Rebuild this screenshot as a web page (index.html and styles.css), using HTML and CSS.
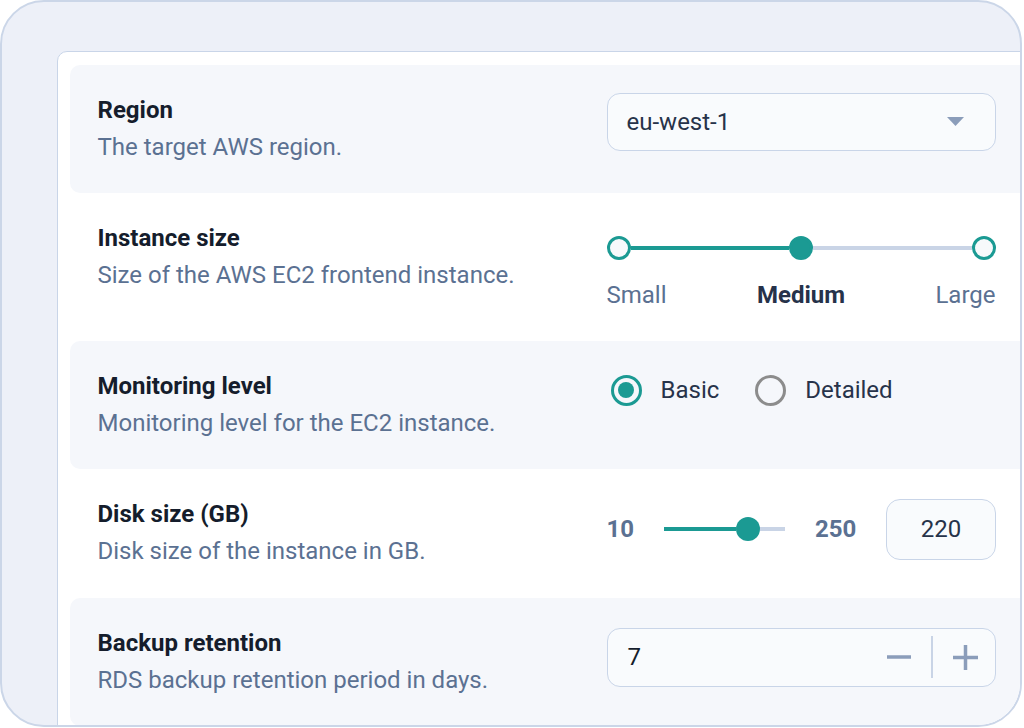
FILE: index.html
```html
<!DOCTYPE html>
<html lang="en">
<head>
  <meta charset="UTF-8" />
  <title>Instance settings</title>
  <link rel="stylesheet" href="styles.css">
</head>
<body>
  <div class="frame">
    <div class="panel">

      <div class="row shaded">
        <div class="info">
          <div class="title">Region</div>
          <div class="desc">The target AWS region.</div>
        </div>
        <div class="control">
          <div class="select">
            <span>eu-west-1</span>
            <svg class="caret" width="17" height="9" viewBox="0 0 17 9"><path d="M0 0h17L8.5 9z" fill="#8b9dba"/></svg>
          </div>
        </div>
      </div>

      <div class="row tall">
        <div class="info">
          <div class="title">Instance size</div>
          <div class="desc">Size of the AWS EC2 frontend instance.</div>
        </div>
        <div class="control">
          <div class="steps">
            <span class="dot"></span>
            <span class="line on"></span>
            <span class="dot on"></span>
            <span class="line"></span>
            <span class="dot"></span>
          </div>
          <div class="step-labels">
            <span>Small</span>
            <span class="current">Medium</span>
            <span>Large</span>
          </div>
        </div>
      </div>

      <div class="row shaded">
        <div class="info">
          <div class="title">Monitoring level</div>
          <div class="desc">Monitoring level for the EC2 instance.</div>
        </div>
        <div class="control">
          <div class="radios">
            <label class="radio checked"><span class="ring"></span>Basic</label>
            <label class="radio"><span class="ring"></span>Detailed</label>
          </div>
        </div>
      </div>

      <div class="row">
        <div class="info">
          <div class="title">Disk size (GB)</div>
          <div class="desc">Disk size of the instance in GB.</div>
        </div>
        <div class="control">
          <div class="range">
            <span class="bound">10</span>
            <div class="track">
              <span class="fill"></span>
              <span class="thumb"></span>
              <span class="rest"></span>
            </div>
            <span class="bound">250</span>
            <div class="num-box">220</div>
          </div>
        </div>
      </div>

      <div class="row shaded">
        <div class="info">
          <div class="title">Backup retention</div>
          <div class="desc">RDS backup retention period in days.</div>
        </div>
        <div class="control">
          <div class="stepper">
            <span class="value">7</span>
            <svg width="24" height="24" viewBox="0 0 24 24"><path d="M0 12h24" stroke="#8b9dba" stroke-width="3.5"/></svg>
            <span class="divider"></span>
            <svg width="25" height="25" viewBox="0 0 25 25"><path d="M0 12.5h25M12.5 0v25" stroke="#8b9dba" stroke-width="3.5"/></svg>
          </div>
        </div>
      </div>

    </div>
  </div>
</body>
</html>
```

FILE: styles.css
```css
* {
  box-sizing: border-box;
}

html, body {
  margin: 0;
  padding: 0;
  width: 1024px;
  height: 728px;
  background: #fff;
  font-family: Roboto, 'Liberation Sans', sans-serif;
  overflow: hidden;
}

.frame {
  width: 1022px;
  height: 727px;
  border: 2px solid #cbd6e8;
  border-radius: 44px;
  background: #edf0f8;
  padding: 49px 0 0 55px;
  overflow: hidden;
}

.panel {
  width: 1000px;
  height: 720px;
  background: #fff;
  border: 1.5px solid #c9d5e8;
  border-radius: 10px 0 0 0;
  padding: 12.5px 0 0 11.5px;
}

.row {
  display: grid;
  grid-template-columns: 509px 389px;
  height: 128px;
  padding: 29px 0 0 28px;
  border-radius: 10px;
}

.row.tall {
  height: 148px;
}

.row:nth-child(4) {
  height: 129px;
}

.shaded {
  background: #f5f7fb;
}

.title {
  font-size: 24px;
  font-weight: 700;
  line-height: 32px;
  color: #151d2c;
  margin-bottom: 5px;
}

.desc {
  font-size: 24px;
  line-height: 32px;
  color: #5b7192;
}

/* select */
.select {
  display: flex;
  align-items: center;
  justify-content: space-between;
  height: 58px;
  margin-top: -1px;
  padding: 0 31px 0 19px;
  border: 1.5px solid #c9d5e8;
  border-radius: 13px;
  background: #f9fbfd;
  font-size: 24px;
  color: #27334a;
}

/* step slider */
.steps {
  display: flex;
  align-items: center;
  margin-top: 14px;
}

.dot {
  width: 24px;
  height: 24px;
  border-radius: 50%;
  border: 3.5px solid #1b9a93;
  background: #f7f9fb;
  flex: none;
}

.dot.on {
  background: #1b9a93;
}

.line {
  flex: 1;
  height: 4px;
  background: #c9d4e6;
}

.line.on {
  background: #1b9a93;
}

.step-labels {
  display: grid;
  grid-template-columns: 1fr auto 1fr;
  margin-top: 20px;
  font-size: 24px;
  line-height: 30px;
  color: #5b7192;
}

.step-labels span:last-child {
  justify-self: end;
}

.step-labels .current {
  font-weight: 700;
  color: #26324a;
}

/* radios */
.radios {
  display: flex;
  gap: 36px;
  margin-top: 5px;
  padding-left: 4px;
}

.radio {
  display: flex;
  align-items: center;
  gap: 19px;
  font-size: 24px;
  line-height: 31px;
  color: #27334a;
}

.ring {
  width: 31px;
  height: 31px;
  border-radius: 50%;
  border: 3px solid #8c8c8c;
  display: flex;
  align-items: center;
  justify-content: center;
}

.radio.checked .ring {
  border: 3.5px solid #1b9a93;
}

.radio.checked .ring::after {
  content: '';
  width: 16px;
  height: 16px;
  border-radius: 50%;
  background: #1b9a93;
}

/* range */
.range {
  display: flex;
  align-items: center;
  gap: 30px;
  margin-top: 1px;
}

.bound {
  font-size: 24px;
  font-weight: 700;
  color: #5b7192;
}

.track {
  display: flex;
  align-items: center;
  width: 122px;
}

.track .fill {
  width: 72px;
  height: 4px;
  background: #1b9a93;
}

.track .thumb {
  width: 24px;
  height: 24px;
  border-radius: 50%;
  background: #1b9a93;
}

.track .rest {
  flex: 1;
  height: 4px;
  background: #c9d4e6;
}

.num-box {
  width: 110px;
  height: 61px;
  display: flex;
  align-items: center;
  justify-content: center;
  border: 1.5px solid #c9d5e8;
  border-radius: 14px;
  background: #f9fbfd;
  font-size: 24px;
  color: #27334a;
}

/* stepper */
.stepper {
  display: flex;
  align-items: center;
  gap: 20px;
  height: 59px;
  margin-top: 1px;
  padding: 0 17px 0 20px;
  border: 1.5px solid #c9d5e8;
  border-radius: 13px;
  background: #f9fbfd;
  font-size: 24px;
  color: #151d2c;
}

.stepper .value {
  flex: 1;
}

.divider {
  width: 1.5px;
  height: 42px;
  background: #c9d4e6;
}
```
